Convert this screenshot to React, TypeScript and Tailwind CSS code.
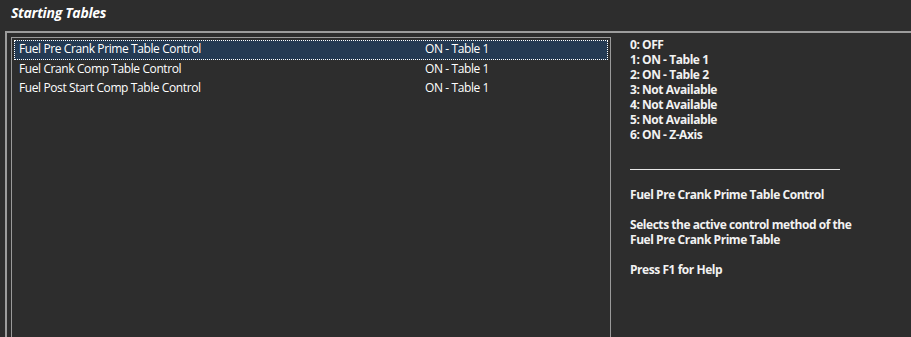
import React from 'react';

const rows = [
  { name: 'Fuel Pre Crank Prime Table Control', value: 'ON - Table 1' },
  { name: 'Fuel Crank Comp Table Control', value: 'ON - Table 1' },
  { name: 'Fuel Post Start Comp Table Control', value: 'ON - Table 1' },
];

const options = [
  '0: OFF',
  '1: ON - Table 1',
  '2: ON - Table 2',
  '3: Not Available',
  '4: Not Available',
  '5: Not Available',
  '6: ON - Z-Axis',
];

const App: React.FC = () => {
  const selected = 0;

  return (
    <div className="w-[911px] h-[337px] overflow-hidden bg-[#2d2d2d] text-white font-['Open_Sans',sans-serif] flex flex-col">
      {/* Title */}
      <div className="h-[31px] shrink-0 pl-[11px] pt-[4px]">
        <h1 className="text-[14px] leading-[18px] font-bold italic tracking-[-0.3px]">Starting Tables</h1>
      </div>

      {/* Group frame */}
      <div className="flex-1 ml-[5px] border-t-2 border-l-2 border-[#9c9c9c] flex pl-[4px] pt-[4px]">
        {/* Parameter list */}
        <div className="w-[600px] shrink-0 border-t border-l border-r border-[#9a9a9a] p-[2px]">
          {rows.map((row, i) => (
            <div
              key={row.name}
              className={`h-[19.5px] flex items-center text-[12px] leading-[16px] tracking-[-0.4px] pb-[1px] ${
                i === selected ? 'bg-[#243a53] border border-dotted border-white' : 'border border-transparent'
              }`}
            >
              <span className="w-[410px] pl-[4px]">{row.name}</span>
              <span>{row.value}</span>
            </div>
          ))}
        </div>

        {/* Help panel */}
        <div className="pl-[19px] text-[12px] leading-[15px] font-bold tracking-[-0.45px] text-[#f2f2f2]">
          {options.map(o => (
            <div key={o}>{o}</div>
          ))}
          <div className="h-[15px]" />
          <div className="h-[15px] w-[210px] pt-[12px]">
            <div className="border-t border-[#e6e6e6]" />
          </div>
          <div className="h-[15px]" />
          <div>Fuel Pre Crank Prime Table Control</div>
          <div className="h-[15px]" />
          <div>Selects the active control method of the</div>
          <div>Fuel Pre Crank Prime Table</div>
          <div className="h-[15px]" />
          <div>Press F1 for Help</div>
        </div>
      </div>
    </div>
  );
};

export default App;
